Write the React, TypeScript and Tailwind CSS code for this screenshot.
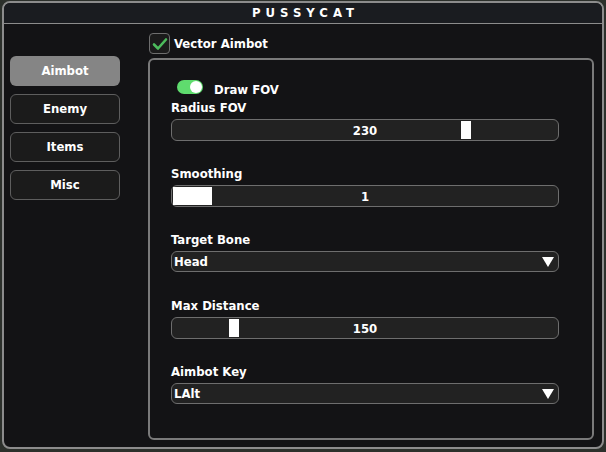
import React from 'react';

type Field =
    | { kind: 'slider'; label: string; value: string; thumbLeft: number; thumbWidth: number }
    | { kind: 'combo'; label: string; value: string };

const tabs = ['Aimbot', 'Enemy', 'Items', 'Misc'];

const fields: Field[] = [
    { kind: 'slider', label: 'Radius FOV', value: '230', thumbLeft: 289, thumbWidth: 10 },
    { kind: 'slider', label: 'Smoothing', value: '1', thumbLeft: 1, thumbWidth: 39 },
    { kind: 'combo', label: 'Target Bone', value: 'Head' },
    { kind: 'slider', label: 'Max Distance', value: '150', thumbLeft: 57, thumbWidth: 10 },
    { kind: 'combo', label: 'Aimbot Key', value: 'LAlt' },
];

function Slider({ value, thumbLeft, thumbWidth }: { value: string; thumbLeft: number; thumbWidth: number }) {
    return (
        <div className="relative h-[22px] w-[388px] rounded-[6px] border border-[#6e6e6e] bg-[#222222] flex items-center justify-center">
            <div
                className="absolute top-[1px] h-[18px] bg-white"
                style={{ left: thumbLeft, width: thumbWidth }}
            />
            <span className="relative text-[13px] leading-none text-white">{value}</span>
        </div>
    );
}

function Combo({ value }: { value: string }) {
    return (
        <div className="h-[21px] mb-[1px] w-[388px] rounded-[6px] border border-[#6e6e6e] bg-[#222222] flex items-center justify-between pl-[2px] pr-[4px]">
            <span className="text-[13px] leading-none text-white">{value}</span>
            <svg width="12" height="10" viewBox="0 0 12 10">
                <path d="M0 0 H12 L6 10 Z" fill="white" />
            </svg>
        </div>
    );
}

export default function App() {
    return (
        <div className="w-[606px] h-[452px] bg-[#2c302b] pt-[1px] pl-[2px] font-['DejaVu_Sans_Condensed','DejaVu_Sans',sans-serif] font-bold">
            <div className="w-[602px] h-[448px] rounded-[8px] border-2 border-[#8c8c8c] bg-[#131315] overflow-hidden flex flex-col">
                {/* Title */}
                <div className="h-[21px] shrink-0 border-b border-[#8c8c8c] bg-[#1a1c20] flex items-center justify-center">
                    <span className="text-[13px] leading-[20px] tracking-[5px] pl-[5px] text-white">PUSSYCAT</span>
                </div>

                <div className="flex flex-1">
                    {/* Sidebar */}
                    <div className="w-[144px] shrink-0 pl-[6px] pt-[32px] flex flex-col gap-[8px]">
                        {tabs.map((tab, i) => (
                            <div
                                key={tab}
                                className={
                                    i === 0
                                        ? 'h-[30px] w-[110px] rounded-[6px] bg-[#858585] flex items-center justify-center text-[13px] text-white'
                                        : 'h-[30px] w-[110px] rounded-[6px] border border-[#5e5e5e] bg-[#1b1b1b] flex items-center justify-center text-[13px] text-white'
                                }
                            >
                                {tab}
                            </div>
                        ))}
                    </div>

                    {/* Main */}
                    <div className="flex flex-col pt-[9px]">
                        <div className="flex items-center h-[21px] ml-[1px]">
                            <div className="w-[21px] h-[21px] rounded-[4px] border border-[#6e6e6e] bg-[#1b1b1b] flex items-center justify-center">
                                <svg width="16" height="14" viewBox="0 0 16 14">
                                    <path d="M2 7.5 L6 11.5 L14 2.5" fill="none" stroke="#4cbb5c" strokeWidth="2.6" strokeLinecap="round" strokeLinejoin="round" />
                                </svg>
                            </div>
                            <span className="ml-[4px] text-[13px] leading-[16px] text-white">Vector Aimbot</span>
                        </div>

                        <div className="mt-[4px] w-[446px] h-[382px] rounded-[6px] border-2 border-[#7a7a7a] bg-[#131315] pt-[20px] pl-[21px]">
                            {/* Draw FOV toggle */}
                            <div className="flex items-start h-[18px]">
                                <div className="ml-[6px] w-[26px] h-[14px] rounded-full bg-[#5fdc6e] flex items-center justify-end pr-[1px]">
                                    <div className="w-[12px] h-[12px] rounded-full bg-white" />
                                </div>
                                <span className="ml-[11px] mt-[2px] text-[13px] leading-[16px] text-white">Draw FOV</span>
                            </div>

                            <div className="mt-[2px] flex flex-col gap-[25px]">
                                {fields.map((f) => (
                                    <div key={f.label} className="flex flex-col gap-[3px]">
                                        <span className="text-[13px] leading-[16px] text-white">{f.label}</span>
                                        {f.kind === 'slider' ? (
                                            <Slider value={f.value} thumbLeft={f.thumbLeft} thumbWidth={f.thumbWidth} />
                                        ) : (
                                            <Combo value={f.value} />
                                        )}
                                    </div>
                                ))}
                            </div>
                        </div>
                    </div>
                </div>
            </div>
        </div>
    );
}
